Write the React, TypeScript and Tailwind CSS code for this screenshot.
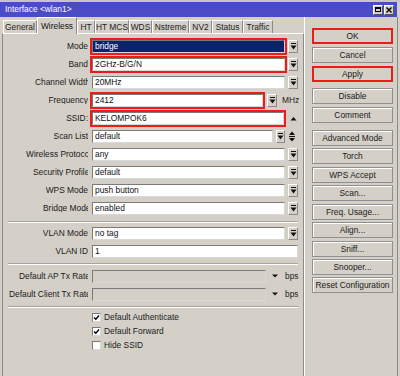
import React from "react";

// Winbox-style "Interface <wlan1>" window

const FONT = "font-['Liberation_Sans',Arial,sans-serif] text-[8.4px] leading-none";

function BarArrow() {
  return (
    <svg width="7" height="7" viewBox="0 0 7 7">
      <rect x="1" y="0" width="5" height="1" fill="#111" />
      <polygon points="0.5,2.5 6.5,2.5 3.5,6.5" fill="#111" />
    </svg>
  );
}

function DropBtn({ w = "w-[10px]" }: { w?: string }) {
  return (
    <div
      className={`${w} h-[13px] flex items-center justify-center bg-[#d4d0c8] border border-t-white border-l-white border-r-[#8a8a8a] border-b-[#8a8a8a]`}
    >
      <BarArrow />
    </div>
  );
}

function Field({
  value = "",
  w,
  red,
  sel,
  off,
}: {
  value?: string;
  w: string;
  red?: boolean;
  sel?: boolean;
  off?: boolean;
}) {
  const bg = off ? "bg-[#d4d0c8]" : sel ? "bg-[#0a246a] text-white" : "bg-white text-[#111]";
  return (
    <div
      className={`${w} h-[13px] flex items-center pl-[2px] border border-t-[#7a7a7a] border-l-[#7a7a7a] border-r-[#d8d8d8] border-b-[#d8d8d8] ${bg} ${
        red ? "outline-2 outline-[#ee1b1b]" : ""
      }`}
    >
      {value}
    </div>
  );
}

function Row({ label, lw = "", children }: { label: string; lw?: string; children: React.ReactNode }) {
  return (
    <div className="flex items-center h-[18px]">
      <div className="w-[85px] flex justify-end text-[#1a1a1a]">
        <span className={`${lw} overflow-hidden whitespace-nowrap`}>{label}</span>
      </div>
      <div className="ml-[4px] flex items-center">{children}</div>
    </div>
  );
}

function Sep({ cls }: { cls: string }) {
  return <div className={`mx-[5px] h-[2px] border-t border-t-[#a8a49c] border-b border-b-white ${cls}`} />;
}

function Check({ label, on }: { label: string; on?: boolean }) {
  return (
    <div className="flex items-center h-[14px] pl-[89px] text-[#1a1a1a]">
      <div className="w-[9px] h-[9px] bg-white border border-t-[#7a7a7a] border-l-[#7a7a7a] border-r-[#d8d8d8] border-b-[#d8d8d8] flex items-center justify-center">
        {on && (
          <svg width="7" height="7" viewBox="0 0 7 7">
            <path d="M1 3.5 L2.8 5.3 L6 1.5" stroke="#000" strokeWidth="1.4" fill="none" />
          </svg>
        )}
      </div>
      <span className="ml-[3px]">{label}</span>
    </div>
  );
}

const tabs = [
  { name: "General", w: "w-[34px]" },
  { name: "Wireless", w: "w-[40px]", active: true },
  { name: "HT", w: "w-[18px]" },
  { name: "HT MCS", w: "w-[34px]" },
  { name: "WDS", w: "w-[23px]" },
  { name: "Nstreme", w: "w-[37px]" },
  { name: "NV2", w: "w-[23px]" },
  { name: "Status", w: "w-[31px]" },
  { name: "Traffic", w: "w-[30px]" },
];

const buttons = [
  { name: "OK", mt: "mt-0", red: true },
  { name: "Cancel", mt: "mt-[3px]" },
  { name: "Apply", mt: "mt-[3px]", red: true },
  { name: "Disable", mt: "mt-[6px]" },
  { name: "Comment", mt: "mt-[3px]" },
  { name: "Advanced Mode", mt: "mt-[7px]" },
  { name: "Torch", mt: "mt-[2px]" },
  { name: "WPS Accept", mt: "mt-[3px]" },
  { name: "Scan...", mt: "mt-[2px]" },
  { name: "Freq. Usage...", mt: "mt-[3px]" },
  { name: "Align...", mt: "mt-[2px]" },
  { name: "Sniff...", mt: "mt-[3px]" },
  { name: "Snooper...", mt: "mt-[2px]" },
  { name: "Reset Configuration", mt: "mt-[2px]" },
];

export default function App() {
  return (
    <div className={`w-[400px] h-[376px] overflow-hidden bg-[#d4d0c8] flex flex-col ${FONT}`}>
      <div className="h-[2px] bg-[#c9c5bd]" />
      {/* title bar */}
      <div className="h-[15px] mr-[3px] bg-[#4b4cc5] flex items-center justify-between pl-[5px] pr-[3px]">
        <span className="text-white">Interface &lt;wlan1&gt;</span>
        <div className="flex gap-[1px]">
          <div className="w-[10px] h-[10px] bg-[#d4d0c8] border border-t-white border-l-white border-r-[#555] border-b-[#555] flex items-center justify-center">
            <div className="w-[6px] h-[5px] border border-black border-t-2" />
          </div>
          <div className="w-[10px] h-[10px] bg-[#d4d0c8] border border-t-white border-l-white border-r-[#555] border-b-[#555] flex items-center justify-center">
            <svg width="6" height="6" viewBox="0 0 6 6">
              <path d="M0.5 0.5 L5.5 5.5 M5.5 0.5 L0.5 5.5" stroke="#000" strokeWidth="1.4" />
            </svg>
          </div>
        </div>
      </div>

      <div className="flex flex-1">
        {/* left: tabs and form */}
        <div className="w-[304px] flex flex-col">
          <div className="h-[16px] flex items-end pl-[3px]">
            {tabs.map((t) =>
              t.active ? (
                <div
                  key={t.name}
                  className={`${t.w} h-[17px] -mb-[1px] relative z-10 bg-[#d4d0c8] border-t border-l border-t-white border-l-white border-r border-r-[#8a8a8a] flex items-center justify-center text-[#111]`}
                >
                  {t.name}
                </div>
              ) : (
                <div
                  key={t.name}
                  className={`${t.w} h-[13px] bg-[#d4d0c8] border-t border-l border-t-white border-l-white border-r border-r-[#8a8a8a] flex items-center justify-center text-[#222]`}
                >
                  {t.name}
                </div>
              )
            )}
          </div>
          <div className="ml-[2px] flex-1 border-t border-t-white border-l border-l-[#8a8a8a] border-r border-r-[#8a8a8a] pt-[3px]">
            <Row label="Mode">
              <Field value="bridge" w="w-[193px]" red sel />
              <div className="ml-[3px]">
                <DropBtn />
              </div>
            </Row>
            <Row label="Band">
              <Field value="2GHz-B/G/N" w="w-[193px]" red />
              <div className="ml-[3px]">
                <DropBtn />
              </div>
            </Row>
            <Row label="Channel Width" lw="max-w-[53px]">
              <Field value="20MHz" w="w-[193px]" />
              <div className="ml-[3px]">
                <DropBtn />
              </div>
            </Row>
            <Row label="Frequency">
              <Field value="2412" w="w-[171px]" red />
              <div className="ml-[4px]">
                <DropBtn />
              </div>
              <span className="ml-[5px] text-[#222]">MHz</span>
            </Row>
            <Row label="SSID:">
              <Field value="KELOMPOK6" w="w-[192px]" red />
              <svg className="ml-[6px]" width="7" height="5" viewBox="0 0 7 5">
                <polygon points="0.5,4.5 6.5,4.5 3.5,1" fill="#111" />
              </svg>
            </Row>
            <Row label="Scan List">
              <Field value="default" w="w-[181px]" />
              <div className="ml-[3px]">
                <DropBtn w="w-[9px]" />
              </div>
              <svg className="ml-[3px]" width="8" height="11" viewBox="0 0 8 11">
                <polygon points="1,4 7,4 4,0.5" fill="#111" />
                <rect x="1" y="5" width="6" height="1" fill="#111" />
                <polygon points="1,7 7,7 4,10.5" fill="#111" />
              </svg>
            </Row>
            <Row label="Wireless Protocol" lw="max-w-[62px]">
              <Field value="any" w="w-[193px]" />
              <div className="ml-[3px]">
                <DropBtn />
              </div>
            </Row>
            <Row label="Security Profile" lw="max-w-[55px]">
              <Field value="default" w="w-[193px]" />
              <div className="ml-[3px]">
                <DropBtn />
              </div>
            </Row>
            <Row label="WPS Mode">
              <Field value="push button" w="w-[193px]" />
              <div className="ml-[3px]">
                <DropBtn />
              </div>
            </Row>
            <Row label="Bridge Mode" lw="max-w-[45px]">
              <Field value="enabled" w="w-[193px]" />
              <div className="ml-[3px]">
                <DropBtn />
              </div>
            </Row>
            <Sep cls="mt-[4px] mb-[1px]" />
            <Row label="VLAN Mode">
              <Field value="no tag" w="w-[193px]" />
              <div className="ml-[3px]">
                <DropBtn />
              </div>
            </Row>
            <Row label="VLAN ID">
              <Field value="1" w="w-[206px]" />
            </Row>
            <Sep cls="mt-[3px] mb-[2px]" />
            <Row label="Default AP Tx Rate" lw="max-w-[69px]">
              <Field w="w-[174px]" off />
              <svg className="ml-[6px]" width="6" height="4" viewBox="0 0 6 4">
                <polygon points="0,0.5 6,0.5 3,3.5" fill="#111" />
              </svg>
              <span className="ml-[7px] text-[#222]">bps</span>
            </Row>
            <Row label="Default Client Tx Rate" lw="max-w-[79px]">
              <Field w="w-[174px]" off />
              <svg className="ml-[6px]" width="6" height="4" viewBox="0 0 6 4">
                <polygon points="0,0.5 6,0.5 3,3.5" fill="#111" />
              </svg>
              <span className="ml-[7px] text-[#222]">bps</span>
            </Row>
            <Sep cls="mt-[3px] mb-[2px]" />
            <Check label="Default Authenticate" on />
            <Check label="Default Forward" on />
            <Check label="Hide SSID" />
          </div>
        </div>

        {/* right: action buttons */}
        <div className="w-[96px] flex">
          <div className="w-[94px] border-l border-l-white border-r border-r-[#8a8a8a] flex flex-col pl-[7px] pt-[11px]">
            {buttons.map((b) => (
              <div
                key={b.name}
                className={`${b.mt} w-[81px] h-[16px] flex items-center justify-center whitespace-nowrap overflow-hidden text-[#1a1a1a] bg-[#d4d0c8] ${
                  b.red
                    ? "border-2 border-[#ee1b1b]"
                    : "border border-[#8f8f8f] shadow-[inset_1px_1px_0_#ffffff]"
                }`}
              >
                {b.name}
              </div>
            ))}
          </div>
        </div>
      </div>
    </div>
  );
}
